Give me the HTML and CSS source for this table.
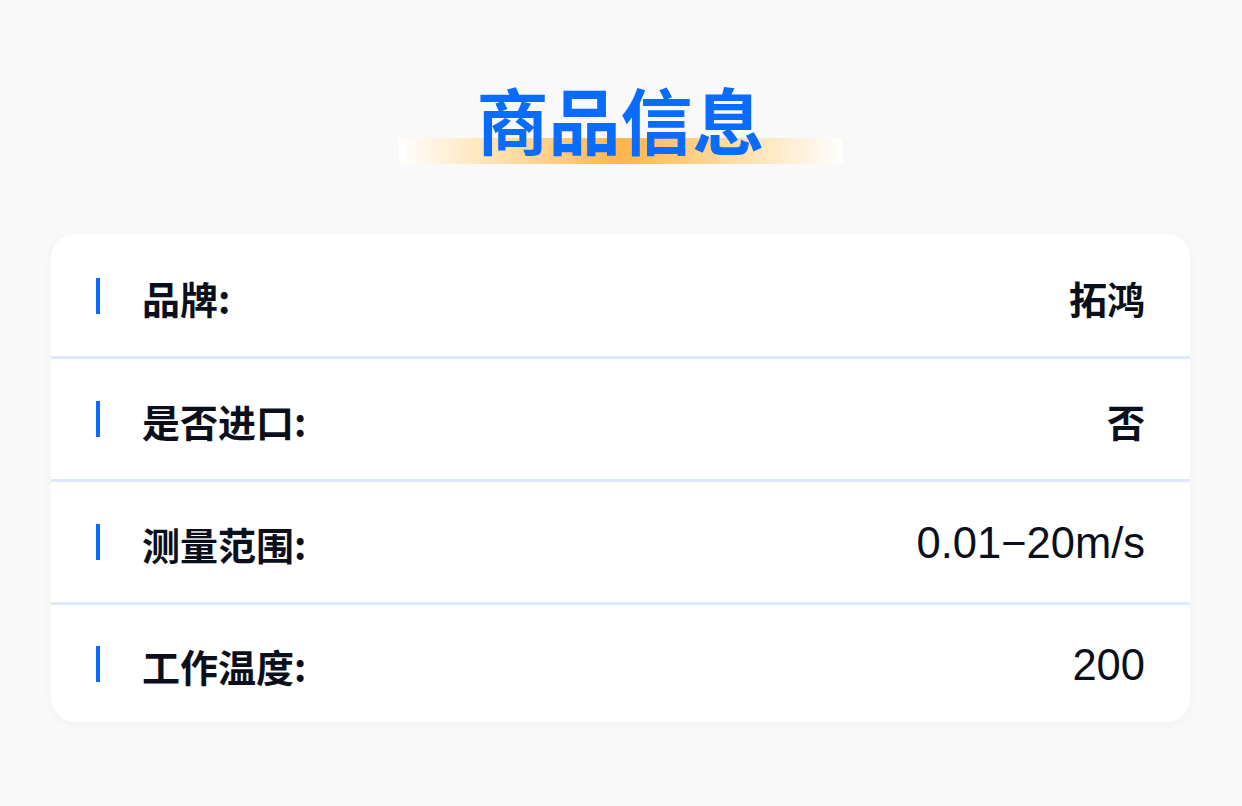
FILE: index.html
```html
<!DOCTYPE html>
<html lang="zh">
<head>
<meta charset="utf-8">
<title>商品信息</title>
<link rel="stylesheet" href="styles.css">
</head>
<body>
<div class="page">
  <header class="heading">
    <h1 class="heading-title">商品信息</h1>
  </header>
  <section class="card">
    <div class="row">
      <span class="mark"></span>
      <span class="label">品牌:</span>
      <span class="value">拓鸿</span>
    </div>
    <div class="row">
      <span class="mark"></span>
      <span class="label">是否进口:</span>
      <span class="value">否</span>
    </div>
    <div class="row">
      <span class="mark"></span>
      <span class="label">测量范围:</span>
      <span class="value value-num">0.01−20m/s</span>
    </div>
    <div class="row">
      <span class="mark"></span>
      <span class="label">工作温度:</span>
      <span class="value value-num">200</span>
    </div>
  </section>
</div>
</body>
</html>
```

FILE: styles.css
```css
* { box-sizing: border-box; }
html, body {
  margin: 0;
  padding: 0;
  background: #f9f9f9;
}
body {
  font-family: "Noto Sans CJK SC", "Liberation Sans", sans-serif;
  color: #0b0f1c;
}
.page {
  width: 1242px;
  height: 806px;
  padding: 78px 52px 0 51px;
  display: flex;
  flex-direction: column;
  align-items: center;
}
.heading {
  position: relative;
  width: 444px;
  height: 86px;
  display: flex;
  justify-content: center;
}
.heading::before {
  content: "";
  position: absolute;
  left: 0;
  right: 0;
  top: 60px;
  height: 26px;
  background: linear-gradient(90deg, #ffffff 0%, #ffe1b0 22%, #ffb54a 50%, #ffe1b0 78%, #ffffff 100%);
}
.heading-title {
  position: relative;
  margin: 0;
  font-size: 72px;
  line-height: 80px;
  font-weight: 700;
  color: #0a6cff;
  letter-spacing: 0;
}
.card {
  margin-top: 70px;
  width: 1139px;
  padding-top: 2px;
  background: #ffffff;
  border-radius: 24px;
  box-shadow: 0 2px 12px rgba(0, 0, 0, 0.03);
  display: flex;
  flex-direction: column;
}
.row {
  display: flex;
  align-items: center;
  height: 123px;
  padding: 0 45px;
  border-bottom: 3px solid #dce8fd;
}
.row:last-child {
  border-bottom: none;
  height: 117px;
}
.mark {
  width: 4px;
  height: 36px;
  background: #0a6cff;
  margin-right: 42px;
  flex: none;
}
.label {
  font-size: 38px;
  font-weight: 700;
  line-height: 1;
  padding-top: 4px;
}
.value {
  margin-left: auto;
  font-size: 38px;
  font-weight: 700;
  line-height: 1;
  padding-top: 4px;
}
.value-num {
  font-family: "Liberation Sans", "Noto Sans CJK SC", sans-serif;
  font-size: 43.5px;
  font-weight: 400;
}
```
